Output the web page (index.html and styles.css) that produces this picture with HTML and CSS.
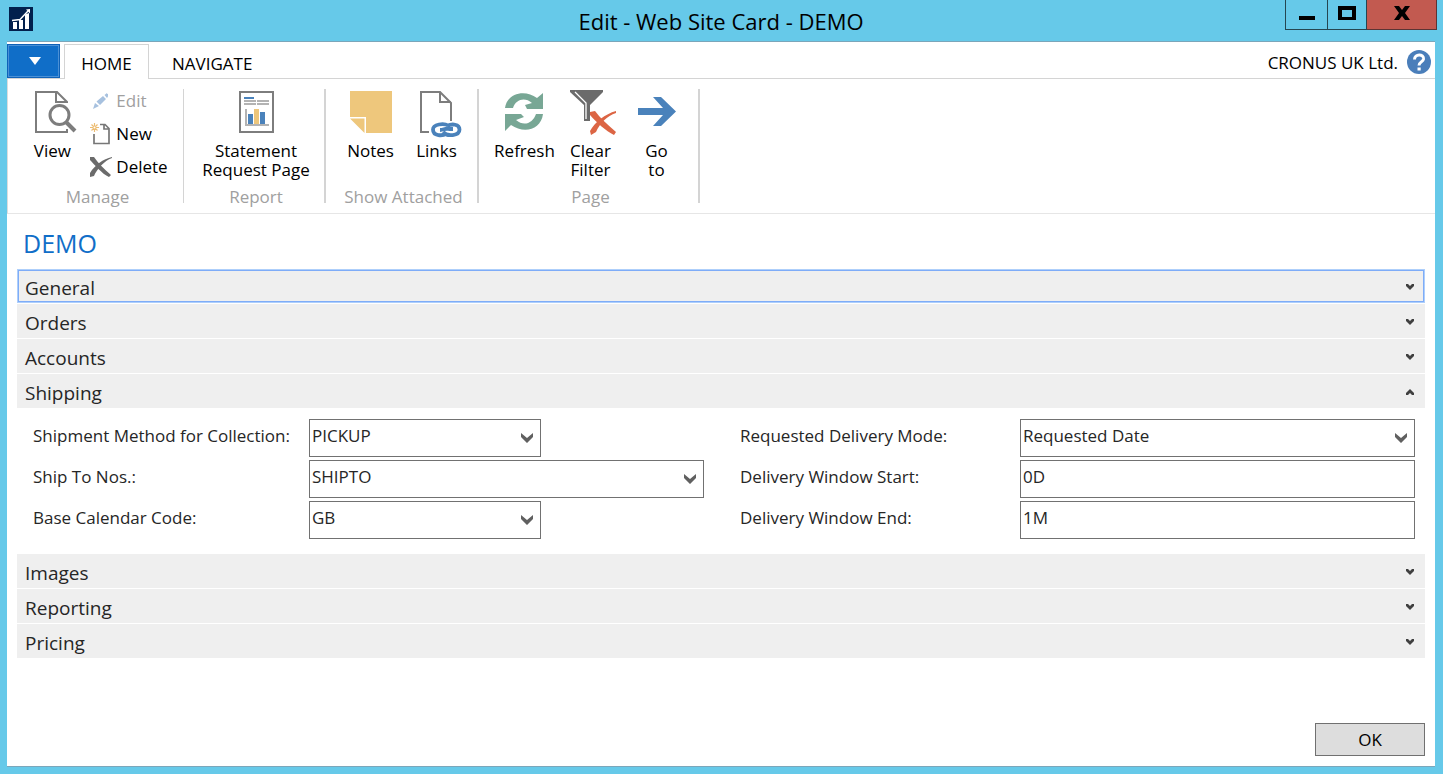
FILE: index.html
```html
<!DOCTYPE html>
<html lang="en">
<head>
<meta charset="utf-8">
<title>Edit - Web Site Card - DEMO</title>
<link rel="stylesheet" href="styles.css">
</head>
<body>
<svg class="sprites" aria-hidden="true">
  <symbol id="chev-down" viewBox="0 0 8 6"><path d="M0 0H2L4 2L6 0H8V2L4 6L0 2Z"/></symbol>
  <symbol id="chev-up" viewBox="0 0 8 6"><path d="M0 6H2L4 4L6 6H8V4L4 0L0 4Z"/></symbol>
  <symbol id="chev-field" viewBox="0 0 12 10"><path d="M0 0L6 5L12 0V4L6 10L0 4Z"/></symbol>
</svg>
<div class="window">
  <header class="titlebar">
    <svg class="app-icon" viewBox="0 0 24 24" aria-hidden="true">
      <rect width="24" height="24" fill="#02204d"/>
      <path d="M4 15h4v7H4zM10 13h4v9h-4zM16 7.500L20 6V22H16z" fill="#fff"/>
      <path d="M3 13.500L11 12.500L19 4" fill="none" stroke="#fff" stroke-width="1.400"/>
      <path d="M17 2.500L21 2V6.500Z" fill="#fff"/>
    </svg>
    <h1 class="window-title">Edit - Web Site Card - DEMO</h1>
    <div class="window-buttons">
      <button class="win-btn win-min" aria-label="Minimize"><svg viewBox="0 0 16 4" width="16" height="4"><path d="M0 0h16v4H0z"/></svg></button>
      <button class="win-btn win-max" aria-label="Maximize"><svg viewBox="0 0 18 14" width="18" height="14"><path d="M0 0h18v14H0zM4 4v7h10V4z" fill-rule="evenodd"/></svg></button>
      <button class="win-btn win-close" aria-label="Close"><svg viewBox="0 0 16 14" width="16" height="14"><path d="M0 0H5L8 4L11 0H16L11 7L16 14H11L8 10L5 14H0L5 7Z"/></svg></button>
    </div>
  </header>

  <div class="client">
    <nav class="tabs">
      <button class="app-menu" aria-label="Application menu"><svg viewBox="0 0 12 8" width="12" height="8"><path d="M0 0H12L6 8Z" fill="#fff"/></svg></button>
      <button class="tab tab-active">HOME</button>
      <button class="tab">NAVIGATE</button>
      <span class="company">CRONUS UK Ltd.</span>
      <button class="help" aria-label="Help">
        <svg viewBox="0 0 24 24" width="24" height="24"><circle cx="12" cy="12" r="12" fill="#4a7eba"/><path d="M7.500 9.500C7.500 3.500 17 3.500 16.500 9C16 12 12 12 12 15.500" fill="none" stroke="#fff" stroke-width="3"/><path d="M10.500 17.500h3.200v3h-3.200z" fill="#fff"/></svg>
      </button>
    </nav>

    <div class="ribbon">
      <section class="group group-manage">
        <div class="group-items">
          <button class="big">
            <svg viewBox="-7 0 48 42" width="48" height="42"><path d="M32 12V11L22 1H1V41H32V38M21 1V11H32" fill="none" stroke="#7d7d7d" stroke-width="2"/><circle cx="24.500" cy="24" r="9.500" fill="#fff" stroke="#7d7d7d" stroke-width="3"/><path d="M31 31L40 40" stroke="#7d7d7d" stroke-width="4"/></svg>
            <span>View</span>
          </button>
          <div class="small-list">
            <button class="small" disabled>
              <svg viewBox="0 0 24 24" width="24" height="24"><path d="M3 20L5 14L9 17ZM6.500 12.500L13 7L16 10L10 16ZM14.500 6L17 4L18 7.500L17 9ZM16 5L18 5V7Z" fill="#a7c1df"/></svg>
              <span>Edit</span>
            </button>
            <button class="small">
              <svg viewBox="0 0 24 24" width="24" height="24"><path d="M10 2.500H15L19 6.500V21.500H4V12M14 3V7H19" fill="none" stroke="#777" stroke-width="1.700"/><path d="M4.500 1V10M0 5.500H9M1.500 2.500L7.500 8.500M7.500 2.500L1.500 8.500" stroke="#edbd73" stroke-width="1.200"/><circle cx="4.500" cy="5.500" r="1" fill="#fff"/></svg>
              <span>New</span>
            </button>
            <button class="small">
              <svg viewBox="0 0 24 24" width="24" height="24"><path d="M0 2L4 2C8 8 14 14 21 20L19 22C12 19 4 9 0 5Z" fill="#6b6b6b"/><path d="M22 3C14 6 7 14 4 21L0 22V18C5 10 13 4 22 2Z" fill="#6b6b6b"/></svg>
              <span>Delete</span>
            </button>
          </div>
        </div>
        <h2 class="group-label">Manage</h2>
      </section>

      <section class="group">
        <div class="group-items">
          <button class="big">
            <svg viewBox="0 0 42 42" width="42" height="42"><rect x="5" y="1" width="33" height="40" fill="#fff" stroke="#7d7d7d" stroke-width="2"/><path d="M9 6h10v2H9zM13 23h5v10h-5zM25 21h5v12h-5z" fill="#4a82bb"/><path d="M9 9h12v2H9zM22 9h12v2H22zM9 12h12v2H9zM22 12h12v2H22zM10 18h2v15h22v2H10z" fill="#b3b3b3"/><path d="M19 18h5v15h-5z" fill="#edc67b"/></svg>
            <span>Statement<br>Request Page</span>
          </button>
        </div>
        <h2 class="group-label">Report</h2>
      </section>

      <section class="group group-attached">
        <div class="group-items">
          <button class="big">
            <svg viewBox="0 0 42 42" width="42" height="42"><path d="M0 0H42V42H16V26H0ZM0 27.500H14.500V42Z" fill="#eec77c"/></svg>
            <span>Notes</span>
          </button>
          <button class="big">
            <svg viewBox="-7 0 48 42" width="48" height="42"><path d="M31 30V12L20 1H1V41H9M20 1V11H31" fill="none" stroke="#7d7d7d" stroke-width="2"/><path d="M28 34.500C24 32 13 33 13 38.500C13 45.500 23 45 26 42.500M23 41C27 46 39.500 45 39.500 38.500C39.500 33 32 32.500 27 35M20 39C24 39 25 37 29 38H33" fill="none" stroke="#4a82bb" stroke-width="3.800"/></svg>
            <span>Links</span>
          </button>
        </div>
        <h2 class="group-label">Show Attached</h2>
      </section>

      <section class="group group-page">
        <div class="group-items">
          <button class="big">
            <svg viewBox="0 0 42 42" width="42" height="42"><path d="M1 17C3 2 21-2 33 7L39 2V18H23L21 14L28 12C21 6 12 8 9 17ZM39 23C37 39 20 43 7 34L1 40V23H17L20 26L12 29C20 36 29 32 32 23Z" fill="#78a795"/></svg>
            <span>Refresh</span>
          </button>
          <button class="big">
            <svg viewBox="-3 0 48 42" width="48" height="42"><path d="M0-1H33V1L20 14V30H14V14L0 1Z" fill="#6b6b6b"/><path d="M5 1L16 12V28" fill="none" stroke="#fff" stroke-width="1.300"/><path d="M20 21L25 20C30 27 38 34 46 41L44 44C36 40 26 31 20 24ZM46 22C37 25 30 32 26 41L21 44L20 40C25 31 35 23 46 20Z" fill="#dc6544"/></svg>
            <span>Clear<br>Filter</span>
          </button>
          <button class="big">
            <svg viewBox="0 0 42 42" width="42" height="42"><path d="M2 17H27L17 6H25L40 20.500L25 35H17L27 24H2Z" fill="#4a82bb"/></svg>
            <span>Go<br>to</span>
          </button>
        </div>
        <h2 class="group-label">Page</h2>
      </section>
    </div>

    <main class="page">
      <h2 class="page-title">DEMO</h2>
      <div class="fasttabs">
        <button class="fasttab fasttab-focused" aria-expanded="false"><span>General</span><svg width="8" height="6"><use href="#chev-down"/></svg></button>
        <button class="fasttab" aria-expanded="false"><span>Orders</span><svg width="8" height="6"><use href="#chev-down"/></svg></button>
        <button class="fasttab" aria-expanded="false"><span>Accounts</span><svg width="8" height="6"><use href="#chev-down"/></svg></button>
        <button class="fasttab" aria-expanded="true"><span>Shipping</span><svg width="8" height="6"><use href="#chev-up"/></svg></button>
        <form class="fields">
          <label class="label-left" for="method">Shipment Method for Collection:</label>
          <div class="combo combo-short"><select id="method"><option>PICKUP</option></select><svg width="12" height="10"><use href="#chev-field"/></svg></div>
          <label class="label-right" for="mode">Requested Delivery Mode:</label>
          <div class="combo"><select id="mode"><option>Requested Date</option></select><svg width="12" height="10"><use href="#chev-field"/></svg></div>

          <label class="label-left" for="nos">Ship To Nos.:</label>
          <div class="combo"><select id="nos"><option>SHIPTO</option></select><svg width="12" height="10"><use href="#chev-field"/></svg></div>
          <label class="label-right" for="start">Delivery Window Start:</label>
          <input id="start" type="text" value="0D">

          <label class="label-left" for="calendar">Base Calendar Code:</label>
          <div class="combo combo-short"><select id="calendar"><option>GB</option></select><svg width="12" height="10"><use href="#chev-field"/></svg></div>
          <label class="label-right" for="end">Delivery Window End:</label>
          <input id="end" type="text" value="1M">
        </form>
        <button class="fasttab" aria-expanded="false"><span>Images</span><svg width="8" height="6"><use href="#chev-down"/></svg></button>
        <button class="fasttab" aria-expanded="false"><span>Reporting</span><svg width="8" height="6"><use href="#chev-down"/></svg></button>
        <button class="fasttab" aria-expanded="false"><span>Pricing</span><svg width="8" height="6"><use href="#chev-down"/></svg></button>
      </div>
      <footer class="actions"><button class="ok">OK</button></footer>
    </main>
  </div>
</div>
</body>
</html>
```

FILE: styles.css
```css
* { box-sizing: border-box; }

body {
  margin: 0;
  background: #66c9e9;
  color: #262626;
  font-family: "Open Sans", "Noto Sans", sans-serif;
  font-size: 17px;
  line-height: 24px;
}

button, select, input {
  margin: 0;
  padding: 0;
  border: 0;
  border-radius: 0;
  background: none;
  color: inherit;
  font: inherit;
}

svg { display: block; flex: none; overflow: visible; }
.sprites { position: absolute; width: 0; height: 0; }

.window {
  display: flex;
  flex-direction: column;
  min-height: 100vh;
  padding: 0 8px 7px 7px;
}

/* Title bar */
.titlebar {
  display: grid;
  grid-template-columns: 152px 1fr 152px;
  height: 41px;
}
.app-icon { width: 24px; height: 24px; margin: 7px 0 0 2px; }
.window-title {
  margin: 0;
  padding-top: 6px;
  color: #000;
  font-size: 22px;
  font-weight: 400;
  line-height: 30px;
  text-align: center;
}
.window-buttons { display: flex; justify-content: flex-end; margin-right: -2px; height: 30px; }
.win-btn {
  display: flex;
  justify-content: center;
  width: 43px;
  padding-top: 6px;
  border: 1px solid #254651;
  border-top: 0;
}
.win-btn + .win-btn { border-left: 0; }
.win-min { padding-top: 16px; }
.win-max { width: 39px; }
.win-close { width: 70px; border-color: #5c3434; background: #c25a50; }

.client {
  display: flex;
  flex: 1;
  flex-direction: column;
  border-top: 1px solid #7ba6ba;
  border-bottom: 1px solid #7ba6ba;
  background: #fff;
}

/* Tabs */
.tabs {
  display: flex;
  align-items: flex-end;
  height: 37px;
  box-shadow: inset 0 -1px #d4d4d4;
  color: #000;
}
.app-menu {
  display: flex;
  align-items: center;
  justify-content: center;
  width: 53px;
  height: 34px;
  margin-bottom: 1px;
  padding-left: 3px;
  border: 1px solid #0f62b8;
  background: #106ec8;
  box-shadow: inset 0 0 0 1px #4a90d6;
}
.tab { height: 35px; padding: 3px 16px 0; border: 1px solid transparent; border-bottom: 0; }
.tab-active { width: 85px; margin: 0 6px 0 4px; border-color: #d4d4d4; background: #fff; }
.company { margin-left: auto; padding-bottom: 4px; }
.help { margin: 0 4px 5px 9px; }

/* Ribbon */
.ribbon {
  display: flex;
  padding: 10px 0;
  border-bottom: 1px solid #e6e6e6;
  border-left: 1px solid #dcdcdc;
  color: #000;
}
.group {
  display: flex;
  flex-direction: column;
  align-items: center;
  min-width: 142px;
  height: 114px;
  padding-left: 4px;
  border-right: 2px solid #d4d4d4;
}
.group-manage { width: 176px; border-right-width: 1px; }
.group-manage .group-items { padding-right: 8px; }
.group-attached { width: 153px; }
.group-page { width: 221px; }
.group-items { display: flex; justify-content: center; }
.big {
  display: flex;
  flex-direction: column;
  align-items: center;
  gap: 8px;
  min-width: 66px;
  padding-top: 2px;
  line-height: 19px;
}
.big span { white-space: nowrap; }
.small-list { display: flex; flex-direction: column; gap: 9px; }
.small { display: flex; align-items: center; gap: 2px; padding-left: 5px; }
.small:disabled { color: #a0a0a0; }
.group-label {
  margin: auto 0 -2px;
  color: #a0a0a0;
  font-size: 17px;
  font-weight: 400;
  line-height: 16px;
}

/* Page */
.page { display: flex; flex: 1; flex-direction: column; padding: 13px 10px 10px; }
.page-title {
  margin: 0 0 10px 6px;
  color: #106ec8;
  font-size: 25px;
  font-weight: 400;
  line-height: 32px;
}
.fasttabs { display: flex; flex-direction: column; gap: 1px; }
.fasttab {
  display: flex;
  align-items: center;
  justify-content: space-between;
  height: 34px;
  padding: 2px 11px 0 8px;
  background: #efefef;
  font-size: 19px;
  text-align: left;
}
.fasttab span { padding-top: 2px; }
.fasttab svg { fill: #404040; }
.fasttab-focused { border: 1px solid #aecffb; box-shadow: inset 0 0 0 1px #7eacf8; padding: 1px 10px 0 7px; }

.fields {
  display: grid;
  grid-template-columns: 276px 1fr 316px 1fr;
  row-gap: 3px;
  padding: 10px 10px 14px 16px;
}
.fields label { padding-top: 5px; }
.label-right { padding-left: 36px; }
.combo { position: relative; }
.combo-short { width: 232px; }
.combo select, .fields input {
  display: block;
  width: 100%;
  height: 38px;
  padding: 0 2px 4px;
  border: 1px solid #717171;
  background: #fff;
  appearance: none;
}
.combo select { padding-right: 28px; }
.fields input { padding-bottom: 6px; }
.combo svg { position: absolute; top: 14px; right: 8px; fill: #606060; pointer-events: none; }

.actions { display: flex; justify-content: flex-end; margin-top: auto; }
.ok {
  width: 110px;
  height: 33px;
  border: 1px solid #707070;
  background: #ddd;
  color: #000;
}
```
